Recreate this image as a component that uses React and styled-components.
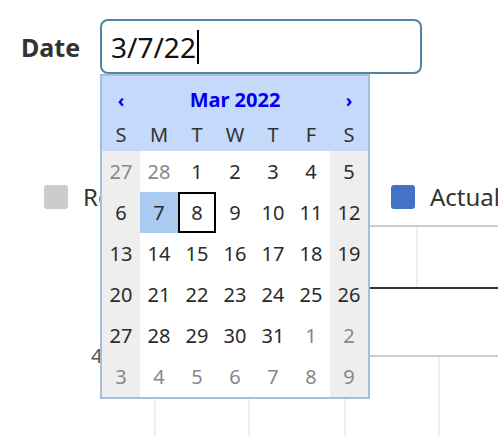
import React from 'react'
import styled, {createGlobalStyle} from 'styled-components'

const GlobalStyle = createGlobalStyle`
  body {
    margin: 0;
    background: #fff;
    font-family: "Noto Sans", "DejaVu Sans", sans-serif;
  }
`

const Page = styled.div`
  position: relative;
  width: 498px;
  height: 436px;
  overflow: hidden;
`
const FormRow = styled.div`
  display: flex;
  align-items: center;
  padding: 19px 0 0 21px;
`
const Label = styled.label`
  width: 79px;
  flex-shrink: 0;
  font-size: 25px;
  font-weight: 700;
  color: #333;
`
const Field = styled.div`
  position: relative;
`
const Input = styled.div`
  box-sizing: border-box;
  display: flex;
  align-items: center;
  width: 322px;
  height: 55px;
  padding-left: 9px;
  border: 2px solid #4f86a0;
  border-radius: 8px;
  font-size: 28px;
  color: #111;
`
const Caret = styled.span`
  display: inline-block;
  width: 2px;
  height: 34px;
  margin-left: 1px;
  background: #000;
`
const Popup = styled.div`
  position: absolute;
  top: 100%;
  left: 0;
  z-index: 2;
  width: 270px;
  box-sizing: border-box;
  border: 2px solid #a5bedf;
  background: #fff;
`
const Head = styled.div`
  display: grid;
  grid-template-columns: repeat(7, 38px);
  background: #c5d9fb;
`
const Nav = styled.div`
  grid-column: ${p => p.$span || 'auto'};
  height: 42px;
  display: flex;
  align-items: center;
  justify-content: center;
  padding-top: ${p => p.$small ? '6px' : '4px'};
  box-sizing: border-box;
  font-size: ${p => p.$small ? '18px' : '20px'};
  font-weight: 700;
  color: #0000f5;
`
const DayName = styled.div`
  height: 33px;
  display: flex;
  align-items: center;
  justify-content: center;
  font-size: 20px;
  color: #333;
`
const Grid = styled.div`
  display: grid;
  grid-template-columns: repeat(7, 38px);
  grid-auto-rows: 41px;
`
const Day = styled.div`
  display: flex;
  align-items: center;
  justify-content: center;
  font-size: 20px;
  color: ${p => p.$other ? '#888' : '#2b2b2b'};
  background: ${p => p.$selected ? '#a9cbf0' : p.$weekend ? '#eee' : 'transparent'};
  box-shadow: ${p => p.$today ? 'inset 0 0 0 2px #000' : 'none'};
`
const Legend = styled.div`
  display: grid;
  grid-template-columns: 347px auto;
  height: 24px;
  margin-top: 106px;
  padding-left: 44px;
`
const LegendItem = styled.div`
  display: flex;
  align-items: center;
  gap: 15px;
  font-size: 24px;
  color: #333;
  white-space: nowrap;
`
const Swatch = styled.span`
  flex-shrink: 0;
  width: 24px;
  height: 24px;
  border-radius: 3px;
  background: ${p => p.$color};
`
const Chart = styled.svg`
  display: block;
  margin-top: 12px;
`

const names = ['S', 'M', 'T', 'W', 'T', 'F', 'S']

const days = [
    [27, 28, 1, 2, 3, 4, 5],
    [6, 7, 8, 9, 10, 11, 12],
    [13, 14, 15, 16, 17, 18, 19],
    [20, 21, 22, 23, 24, 25, 26],
    [27, 28, 29, 30, 31, 1, 2],
    [3, 4, 5, 6, 7, 8, 9],
]

function App() {
    return (
        <Page>
            <GlobalStyle/>
            <FormRow>
                <Label>Date</Label>
                <Field>
                    <Input>3/7/22<Caret/></Input>
                    <Popup>
                        <Head>
                            <Nav $small>‹</Nav>
                            <Nav $span="span 5">Mar 2022</Nav>
                            <Nav $small>›</Nav>
                            {names.map((n, i) => <DayName key={i}>{n}</DayName>)}
                        </Head>
                        <Grid>
                            {days.map((week, r) => week.map((d, c) => {
                                const other = (r === 0 && d > 20) || (r >= 4 && d < 10)
                                return (
                                    <Day key={r + '-' + c}
                                         $other={other}
                                         $weekend={c === 0 || c === 6}
                                         $selected={r === 1 && d === 7}
                                         $today={r === 1 && d === 8}>
                                        {d}
                                    </Day>
                                )
                            }))}
                        </Grid>
                    </Popup>
                </Field>
            </FormRow>
            <Legend>
                <LegendItem><Swatch $color="#cccccc"/>Reference</LegendItem>
                <LegendItem><Swatch $color="#4472c4"/>Actual</LegendItem>
            </Legend>
            <Chart width="498" height="221" viewBox="0 215 498 221">
                <line x1="110" y1="225" x2="498" y2="225" stroke="#ccc" strokeWidth="2"/>
                <line x1="417" y1="226" x2="417" y2="286" stroke="#eee" strokeWidth="2"/>
                <line x1="110" y1="287" x2="498" y2="287" stroke="#333" strokeWidth="2"/>
                <line x1="110" y1="355" x2="498" y2="355" stroke="#ccc" strokeWidth="2"/>
                {[155, 249, 345, 439].map(x =>
                    <line key={x} x1={x} y1="356" x2={x} y2="436" stroke="#eee" strokeWidth="2"/>
                )}
                <text x="91" y="362" fontSize="20" fill="#555" fontFamily="Noto Sans, sans-serif">4</text>
            </Chart>
        </Page>
    )
}

export default App
